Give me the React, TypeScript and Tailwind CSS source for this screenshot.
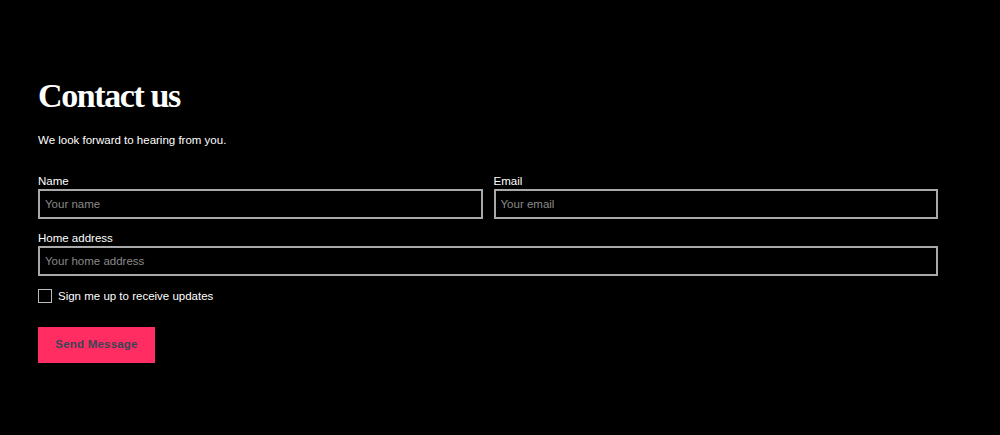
import { useState } from "react";

export default function App() {
  const [name, setName] = useState("");
  const [email, setEmail] = useState("");
  const [address, setAddress] = useState("");
  const [updates, setUpdates] = useState(false);

  return (
    <div className="min-h-[435px] w-full bg-black text-white font-['Liberation_Sans',Arial,sans-serif]">
      <div className="px-[38px] pt-[76px] w-[976px]">
        <h1 className="font-['Liberation_Serif',serif] font-bold text-[34px] leading-[40px] tracking-[-1.4px]">
          Contact us
        </h1>
        <p className="mt-[16px] text-[11.5px] leading-[16px]">We look forward to hearing from you.</p>

        <form className="mt-[26px]" onSubmit={(e) => e.preventDefault()}>
          <div className="grid grid-cols-2 gap-[11px]">
            <div>
              <label className="block text-[11.5px] leading-[14px] mb-[1px]">Name</label>
              <input
                type="text"
                value={name}
                onChange={(e) => setName(e.target.value)}
                placeholder="Your name"
                className="block w-full h-[30px] border-2 border-[#a9a9a9] bg-black px-[5px] text-[11.5px] text-white placeholder:text-[#8a8a8a] outline-none"
              />
            </div>
            <div>
              <label className="block text-[11.5px] leading-[14px] mb-[1px]">Email</label>
              <input
                type="email"
                value={email}
                onChange={(e) => setEmail(e.target.value)}
                placeholder="Your email"
                className="block w-full h-[30px] border-2 border-[#a9a9a9] bg-black px-[5px] text-[11.5px] text-white placeholder:text-[#8a8a8a] outline-none"
              />
            </div>
          </div>

          <div className="mt-[12px]">
            <label className="block text-[11.5px] leading-[14px] mb-[1px]">Home address</label>
            <input
              type="text"
              value={address}
              onChange={(e) => setAddress(e.target.value)}
              placeholder="Your home address"
              className="block w-full h-[30px] border-2 border-[#a9a9a9] bg-black px-[5px] text-[11.5px] text-white placeholder:text-[#8a8a8a] outline-none"
            />
          </div>

          <label className="mt-[12px] flex items-center gap-[6px] text-[11.5px] leading-[16px] cursor-pointer">
            <span className="w-[14px] h-[14px] border-[1.5px] border-[#bdbdbd] bg-black flex items-center justify-center">
              {updates && <span className="w-[8px] h-[8px] bg-white" />}
            </span>
            <input type="checkbox" className="hidden" checked={updates} onChange={(e) => setUpdates(e.target.checked)} />
            Sign me up to receive updates
          </label>

          <button
            type="submit"
            className="mt-[23px] h-[36px] w-[117px] bg-[#ff2d62] text-[#3a4656] text-[11.5px] font-bold tracking-[0.2px]"
          >
            Send Message
          </button>
        </form>
      </div>
    </div>
  );
}
